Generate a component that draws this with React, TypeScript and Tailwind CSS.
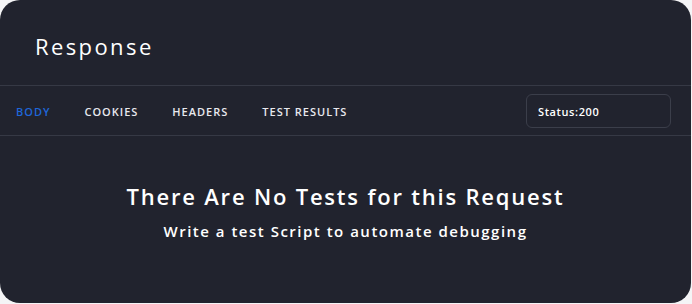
const tabs = ['BODY', 'COOKIES', 'HEADERS', 'TEST RESULTS'];

export default function App() {
    return (
        <div className="h-[304px] w-[692px] bg-[#f4f4f6]" style={{ fontFamily: '"Open Sans", "Noto Sans", sans-serif' }}>
            <div className="flex h-[303px] w-[691px] flex-col rounded-[20px] bg-[#21232e] text-white">
                <div className="flex h-[86px] items-center border-b border-[#363945] pl-[35px] pt-[7px]">
                    <h2 className="text-[22px] font-medium tracking-[2.4px]">Response</h2>
                </div>
                <div className="flex h-[50px] items-center justify-between border-b border-[#363945] pr-[20px] pl-[16px]">
                    <div className="mt-[4px] flex items-center gap-[34px] text-[11px] font-semibold tracking-[1px]">
                        {tabs.map((tab, i) => (
                            <span key={tab} className={i === 0 ? 'text-[#1f66d8]' : 'text-[#e8e9ee]'}>
                                {tab}
                            </span>
                        ))}
                    </div>
                    <div className="flex h-[34px] w-[145px] items-center rounded-[6px] border border-[#3b3e4a] px-[11px] pt-[3px] text-[11px] font-semibold tracking-[0.6px]">
                        Status:200
                    </div>
                </div>
                <div className="flex flex-1 flex-col items-center pt-[44px]">
                    <p className="text-[22px] font-semibold tracking-[1.8px]">There Are No Tests for this Request</p>
                    <p className="mt-[7px] text-[15px] font-semibold tracking-[1.5px]">Write a test Script to automate debugging</p>
                </div>
            </div>
        </div>
    );
}
